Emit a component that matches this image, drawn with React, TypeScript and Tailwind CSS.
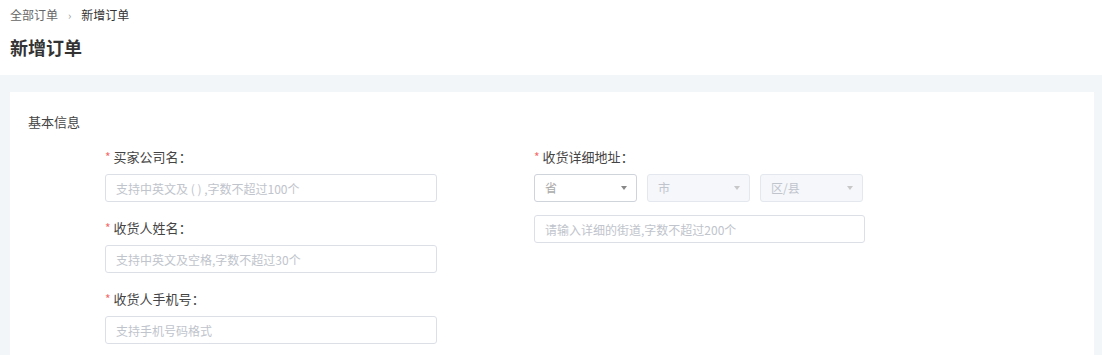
import React from 'react';

const font = { fontFamily: '"Noto Sans CJK SC", "Noto Sans", sans-serif' };

function Label({ text }: { text: string }) {
  return (
    <div className="flex items-center h-5 text-[13px] text-[#444]">
      <span className="text-[#f56c6c] mr-[3px] text-[12px]">*</span>
      <span>{text}：</span>
    </div>
  );
}

function TextInput({ placeholder, width }: { placeholder: string; width: string }) {
  return (
    <input
      readOnly
      placeholder={placeholder}
      className={`${width} h-[28px] border border-[#dcdfe6] rounded-[3px] px-[10px] text-[12px] text-[#333] placeholder:text-[#c0c4cc] outline-none bg-white`}
      style={font}
    />
  );
}

function Select({ text, disabled }: { text: string; disabled?: boolean }) {
  return (
    <div
      className={`w-[103px] h-[28px] rounded-[3px] border flex items-center justify-between pl-[10px] pr-[9px] text-[12px] ${
        disabled ? 'bg-[#f5f7fa] border-[#e4e7ed] text-[#c0c4cc]' : 'bg-white border-[#cfd3da] text-[#aaa]'
      }`}
    >
      <span>{text}</span>
      <svg width="6" height="4" viewBox="0 0 6 4">
        <path d="M0 0h6L3 4z" fill={disabled ? '#c8c8c8' : '#888'} />
      </svg>
    </div>
  );
}

export default function App() {
  return (
    <div className="w-[1102px] h-[355px] bg-white overflow-hidden" style={font}>
      <div className="px-[10px] pt-[6px] h-[75px]">
        <div className="flex items-center h-[18px] text-[12px] text-[#666]">
          <span>全部订单</span>
          <span className="mx-[10px] text-[#999] text-[11px]">›</span>
          <span className="text-[#333]">新增订单</span>
        </div>
        <h1 className="mt-[11px] text-[18px] font-bold text-[#333] leading-[24px]">新增订单</h1>
      </div>
      <div className="bg-[#f3f6f9] pl-[10px] pr-[8px] pt-[17px] h-[280px]">
        <div className="bg-white h-full pt-[20px] pl-[18px]">
          <div className="h-5 leading-5 text-[13px] text-[#444]">基本信息</div>
          <div className="flex mt-[15px] pl-[77px]">
            <div className="w-[429px] flex flex-col gap-[16px]">
              <div className="flex flex-col gap-[7px]">
                <Label text="买家公司名" />
                <TextInput width="w-[332px]" placeholder="支持中英文及 ( ) ,字数不超过100个" />
              </div>
              <div className="flex flex-col gap-[7px]">
                <Label text="收货人姓名" />
                <TextInput width="w-[332px]" placeholder="支持中英文及空格,字数不超过30个" />
              </div>
              <div className="flex flex-col gap-[7px]">
                <Label text="收货人手机号" />
                <TextInput width="w-[332px]" placeholder="支持手机号码格式" />
              </div>
            </div>
            <div className="flex flex-col">
              <Label text="收货详细地址" />
              <div className="flex gap-[10px] mt-[7px]">
                <Select text="省" />
                <Select text="市" disabled />
                <Select text="区/县" disabled />
              </div>
              <div className="mt-[13px]">
                <TextInput width="w-[331px]" placeholder="请输入详细的街道,字数不超过200个" />
              </div>
            </div>
          </div>
        </div>
      </div>
    </div>
  );
}
